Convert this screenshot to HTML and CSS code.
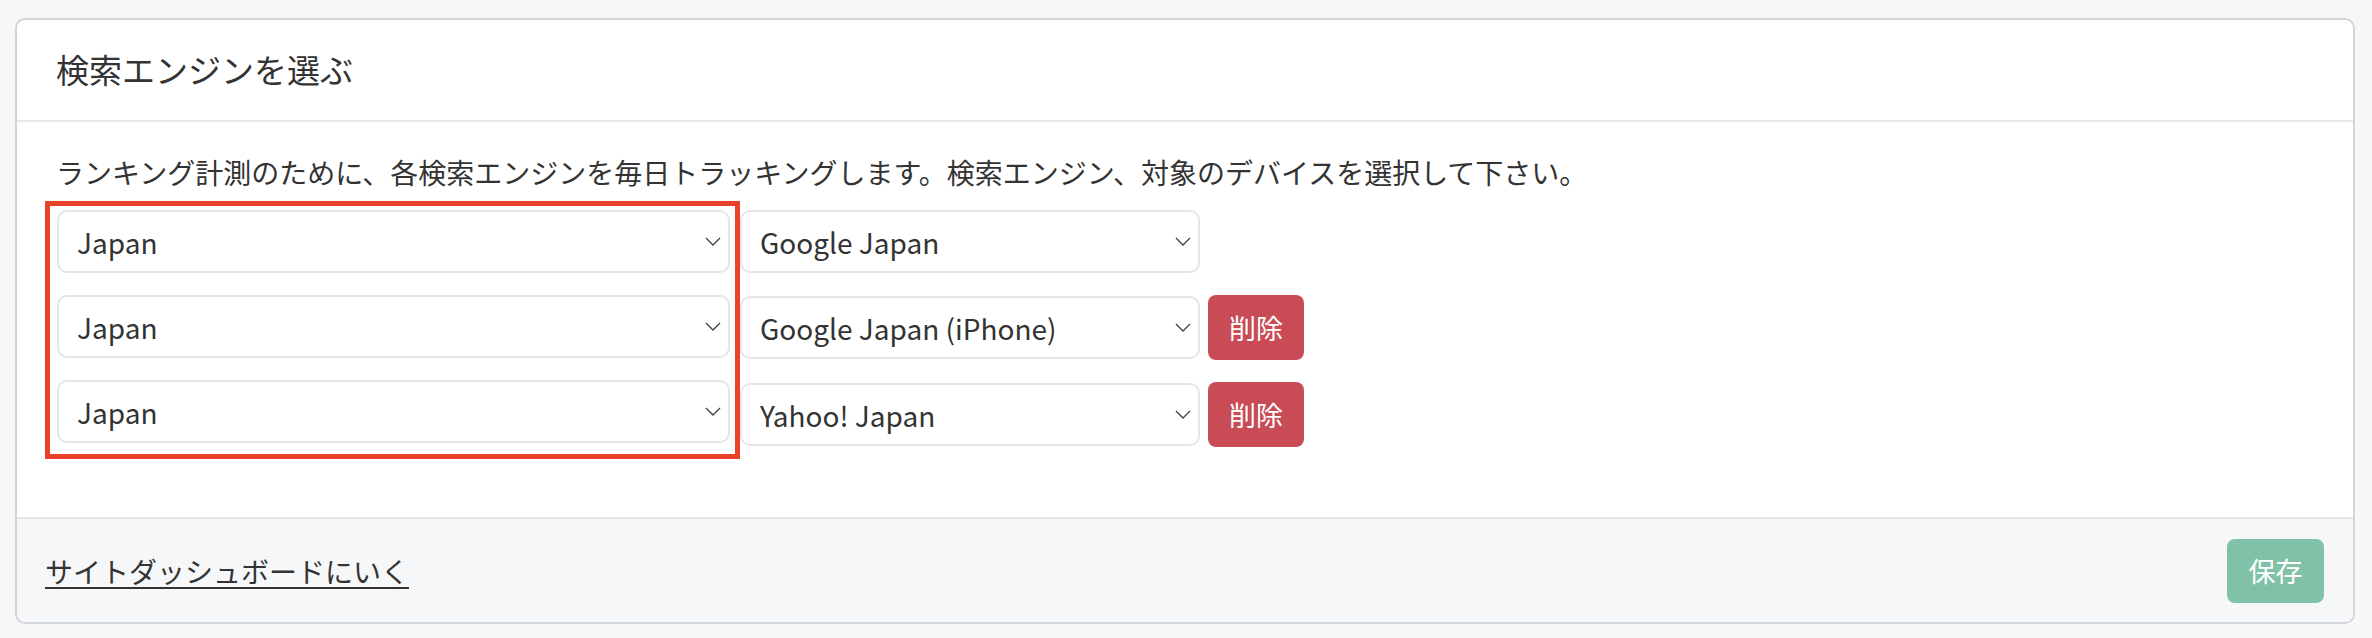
FILE: index.html
```html
<!DOCTYPE html>
<html lang="ja">

<head>
    <meta charset="utf-8">
    <meta name="viewport" content="width=device-width, initial-scale=1.0">
    <title>検索エンジンを選ぶ</title>
    <link rel="stylesheet" href="styles.css">
</head>

<body>
    <section class="card">
        <header class="card-header">
            <h1>検索エンジンを選ぶ</h1>
        </header>

        <div class="card-body">
            <p class="lead">ランキング計測のために、各検索エンジンを毎日トラッキングします。検索エンジン、対象のデバイスを選択して下さい。</p>

            <div class="engines">
                <div class="country-col">
                    <div class="select-wrap">
                        <select class="country">
                            <option>Japan</option>
                        </select>
                        <svg class="chevron" viewBox="0 0 16 9"><path d="M1 1l7 7 7-7" /></svg>
                    </div>
                    <div class="select-wrap">
                        <select class="country">
                            <option>Japan</option>
                        </select>
                        <svg class="chevron" viewBox="0 0 16 9"><path d="M1 1l7 7 7-7" /></svg>
                    </div>
                    <div class="select-wrap">
                        <select class="country">
                            <option>Japan</option>
                        </select>
                        <svg class="chevron" viewBox="0 0 16 9"><path d="M1 1l7 7 7-7" /></svg>
                    </div>
                    <div class="markering"></div>
                </div>

                <div class="engine-col">
                    <div class="engine-row">
                        <div class="select-wrap engine">
                            <select>
                                <option>Google Japan</option>
                            </select>
                            <svg class="chevron" viewBox="0 0 16 9"><path d="M1 1l7 7 7-7" /></svg>
                        </div>
                    </div>
                    <div class="engine-row">
                        <div class="select-wrap engine">
                            <select>
                                <option>Google Japan (iPhone)</option>
                            </select>
                            <svg class="chevron" viewBox="0 0 16 9"><path d="M1 1l7 7 7-7" /></svg>
                        </div>
                        <button class="btn btn-slet">削除</button>
                    </div>
                    <div class="engine-row">
                        <div class="select-wrap engine">
                            <select>
                                <option>Yahoo! Japan</option>
                            </select>
                            <svg class="chevron" viewBox="0 0 16 9"><path d="M1 1l7 7 7-7" /></svg>
                        </div>
                        <button class="btn btn-slet">削除</button>
                    </div>
                </div>
            </div>
        </div>

        <footer class="card-footer">
            <a href="#">サイトダッシュボードにいく</a>
            <button class="btn btn-gem" disabled>保存</button>
        </footer>
    </section>
</body>

</html>
```

FILE: styles.css
```css
* {
    box-sizing: border-box;
}

body {
    margin: 0;
    padding: 18px 17px 0 15px;
    background-color: #f7f7f7;
    font-family: "Noto Sans CJK JP", "Noto Sans", sans-serif;
    color: #333;
}

.card {
    background-color: #fff;
    border: 2px solid #d1d5d9;
    border-radius: 10px;
    overflow: hidden;
}

.card-header {
    height: 102px;
    display: flex;
    align-items: center;
    padding-left: 39px;
    border-bottom: 2px solid #e8e8e8;
}

.card-header h1 {
    margin: 0;
    font-size: 33px;
    font-weight: 400;
    line-height: 1.2;
}

.card-body {
    padding: 30px 39px 70px 40px;
}

.lead {
    margin: 0 0 18px -1px;
    font-size: 28px;
    line-height: 40px;
}

.engines {
    display: flex;
    gap: 10px;
}

.country-col {
    position: relative;
    width: 673px;
    display: flex;
    flex-direction: column;
    gap: 22px;
}

.engine-col {
    display: flex;
    flex-direction: column;
    gap: 22px;
}

.engine-row {
    display: flex;
    align-items: center;
    gap: 8px;
}

.select-wrap {
    position: relative;
    height: 63px;
}

.engine {
    width: 460px;
}

.select-wrap select {
    appearance: none;
    width: 100%;
    height: 100%;
    padding: 0 40px 0 18px;
    border: 2px solid #e5e5e5;
    border-radius: 10px;
    background-color: #fff;
    font-family: inherit;
    font-size: 28px;
    color: #333;
}

.chevron {
    position: absolute;
    right: 9px;
    top: 27px;
    width: 16px;
    height: 9px;
    fill: none;
    stroke: #444;
    stroke-width: 1.4;
    pointer-events: none;
}

/* rød markering rundt om landene */
.markering {
    position: absolute;
    top: -9px;
    left: -12px;
    right: -10px;
    bottom: -12px;
    border: 5px solid #e8432a;
    pointer-events: none;
}

.btn {
    border: none;
    border-radius: 8px;
    font-family: inherit;
    font-size: 27px;
    color: #fff;
    cursor: pointer;
}

.btn-slet {
    width: 96px;
    height: 65px;
    background-color: #c84b55;
}

.card-footer {
    height: 105px;
    display: flex;
    justify-content: space-between;
    align-items: center;
    padding: 0 29px 0 28px;
    background-color: #f6f7f9;
    border-top: 2px solid #e3e5e8;
}

.card-footer a {
    font-size: 28px;
    color: #333;
    text-decoration: underline;
    text-underline-offset: 4px;
}

.btn-gem {
    width: 97px;
    height: 64px;
    background-color: #80c1a7;
}
```
